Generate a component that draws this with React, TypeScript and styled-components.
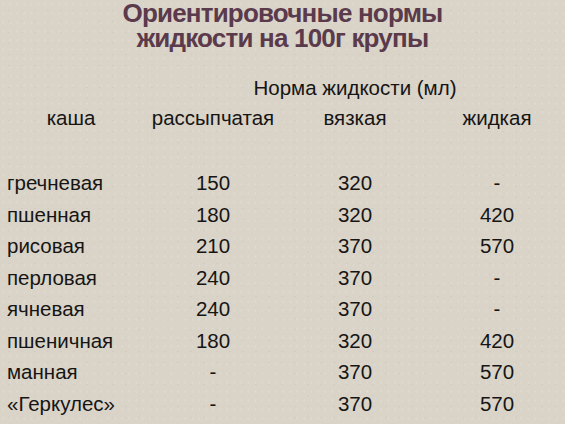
import { Fragment } from 'react';
import styled, { createGlobalStyle } from 'styled-components';

const GlobalStyle = createGlobalStyle`
  html, body {
    margin: 0;
    padding: 0;
    background-color: #d9d3c8;
  }
  body {
    font-family: "Liberation Sans", Arial, sans-serif;
    color: #161514;
  }
`;

const Page = styled.div`
  width: 565px;
  height: 424px;
  overflow: hidden;
  display: flex;
  flex-direction: column;
  padding-top: 1px;
  box-sizing: border-box;
  background-color: #d9d3c8;
  background-image: radial-gradient(rgba(255, 255, 255, 0.14) 1px, transparent 1px),
    radial-gradient(rgba(120, 110, 95, 0.07) 1px, transparent 1px);
  background-size: 7px 9px, 13px 11px;
  background-position: 0 0, 3px 5px;
`;

const Title = styled.h1`
  margin: 0;
  text-align: center;
  font-size: 26px;
  line-height: 25px;
  letter-spacing: -0.8px;
  font-weight: bold;
  color: #5a3a4b;
`;

const Table = styled.div`
  display: grid;
  grid-template-columns: repeat(4, 142px);
  font-size: 20.5px;
`;

const HeadTable = styled(Table)`
  margin-top: 25px;
  row-gap: 6px;
  line-height: 24px;
`;

const GroupHead = styled.div`
  grid-column: 2 / span 3;
  text-align: center;
`;

const SubHead = styled.div`
  text-align: center;
`;

const Body = styled(Table)`
  margin-top: 37px;
  line-height: 31.5px;
`;

const Name = styled.div`
  padding-left: 7px;
`;

const Value = styled.div`
  text-align: center;
`;

const rows: [string, string, string, string][] = [
  ['гречневая', '150', '320', '-'],
  ['пшенная', '180', '320', '420'],
  ['рисовая', '210', '370', '570'],
  ['перловая', '240', '370', '-'],
  ['ячневая', '240', '370', '-'],
  ['пшеничная', '180', '320', '420'],
  ['манная', '-', '370', '570'],
  ['«Геркулес»', '-', '370', '570'],
];

const App = () => {
  return (
    <Page>
      <GlobalStyle />
      <Title>
        Ориентировочные нормы
        <br />
        жидкости на 100г крупы
      </Title>
      <HeadTable>
        <div />
        <GroupHead>Норма жидкости (мл)</GroupHead>
        <SubHead>каша</SubHead>
        <SubHead>рассыпчатая</SubHead>
        <SubHead>вязкая</SubHead>
        <SubHead>жидкая</SubHead>
      </HeadTable>
      <Body>
        {rows.map((r) => (
          <Fragment key={r[0]}>
            <Name>{r[0]}</Name>
            <Value>{r[1]}</Value>
            <Value>{r[2]}</Value>
            <Value>{r[3]}</Value>
          </Fragment>
        ))}
      </Body>
    </Page>
  );
};

export default App;
